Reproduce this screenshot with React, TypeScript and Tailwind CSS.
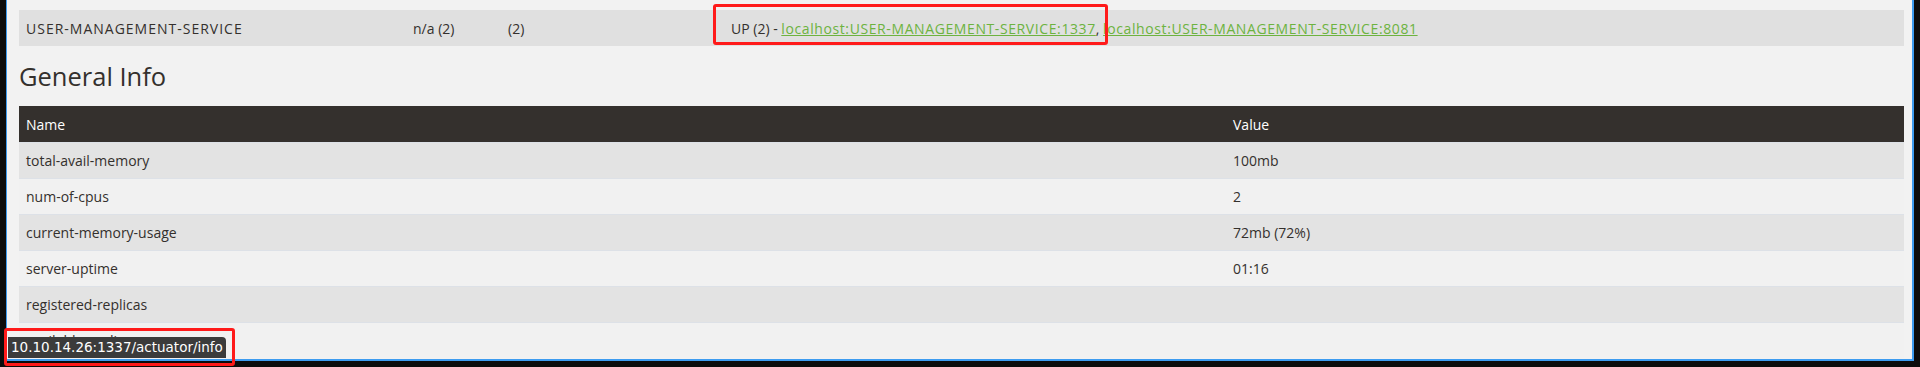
import React from "react";

const info = [
  { name: "total-avail-memory", value: "100mb" },
  { name: "num-of-cpus", value: "2" },
  { name: "current-memory-usage", value: "72mb (72%)" },
  { name: "server-uptime", value: "01:16" },
  { name: "registered-replicas", value: "" },
  { name: "available-replicas", value: "" },
];

function ServiceRow() {
  return (
    <div className="flex h-[36px] items-center bg-[#e0e0e0] text-[14px] text-[#34302d]">
      <div className="w-[387px] shrink-0 pl-[7px] tracking-[1px]">USER-MANAGEMENT-SERVICE</div>
      <div className="w-[95px] shrink-0 pl-[7px]">n/a (2)</div>
      <div className="w-[223px] shrink-0 pl-[7px]">(2)</div>
      <div className="shrink-0 pl-[7px]">
        UP (2) -{" "}
        <a className="tracking-[0.6px] text-[#6db33f] underline">localhost:USER-MANAGEMENT-SERVICE:1337</a>
        ,{" "}
        <a className="tracking-[0.6px] text-[#6db33f] underline">localhost:USER-MANAGEMENT-SERVICE:8081</a>
      </div>
    </div>
  );
}

function InfoTable() {
  return (
    <div className="text-[14px] text-[#34302d]">
      <div className="flex h-[36px] items-center bg-[#34302d] text-white">
        <div className="w-[1207px] shrink-0 pl-[7px]">Name</div>
        <div className="pl-[7px]">Value</div>
      </div>
      {info.map((row, i) => (
        <div
          key={row.name}
          className={
            "flex h-[36px] items-center border-t border-[#dde1e7] " +
            (i % 2 === 0 ? "bg-[#e3e3e3]" : "bg-[#f1f1f1]")
          }
        >
          <div className="w-[1207px] shrink-0 pl-[7px]">{row.name}</div>
          <div className="pl-[7px]">{row.value}</div>
        </div>
      ))}
    </div>
  );
}

export default function App() {
  return (
    <div className="relative h-[367px] w-[1920px] overflow-hidden bg-[#0c0c0c] font-['Open_Sans',sans-serif]">
      <div className="ml-[6px] h-[361px] w-[1908px] overflow-hidden border-b-2 border-l border-r-2 border-[#3d9cf0] bg-[#f2f2f2] pl-[12px] pr-[8px] pt-[10px]">
        <ServiceRow />
        <h2 className="flex h-[60px] items-center text-[25.5px] text-[#34302d]">General Info</h2>
        <InfoTable />
      </div>

      {/* highlight around the first instance link */}
      <div className="absolute left-[713px] top-[4px] h-[41px] w-[395px] rounded-[3px] border-[3px] border-[#ff1a1a]" />

      {/* browser status tooltip */}
      <div className="absolute left-[8px] top-[337px] h-[21px] rounded-tr-[4px] bg-[#3b3b3b] px-[3px] font-['DejaVu_Sans',sans-serif] text-[13.5px] leading-[21px] text-white">
        10.10.14.26:1337/actuator/info
      </div>
      <div className="absolute left-[4px] top-[328px] h-[38px] w-[231px] rounded-[3px] border-[3px] border-[#ff1a1a]" />
    </div>
  );
}
